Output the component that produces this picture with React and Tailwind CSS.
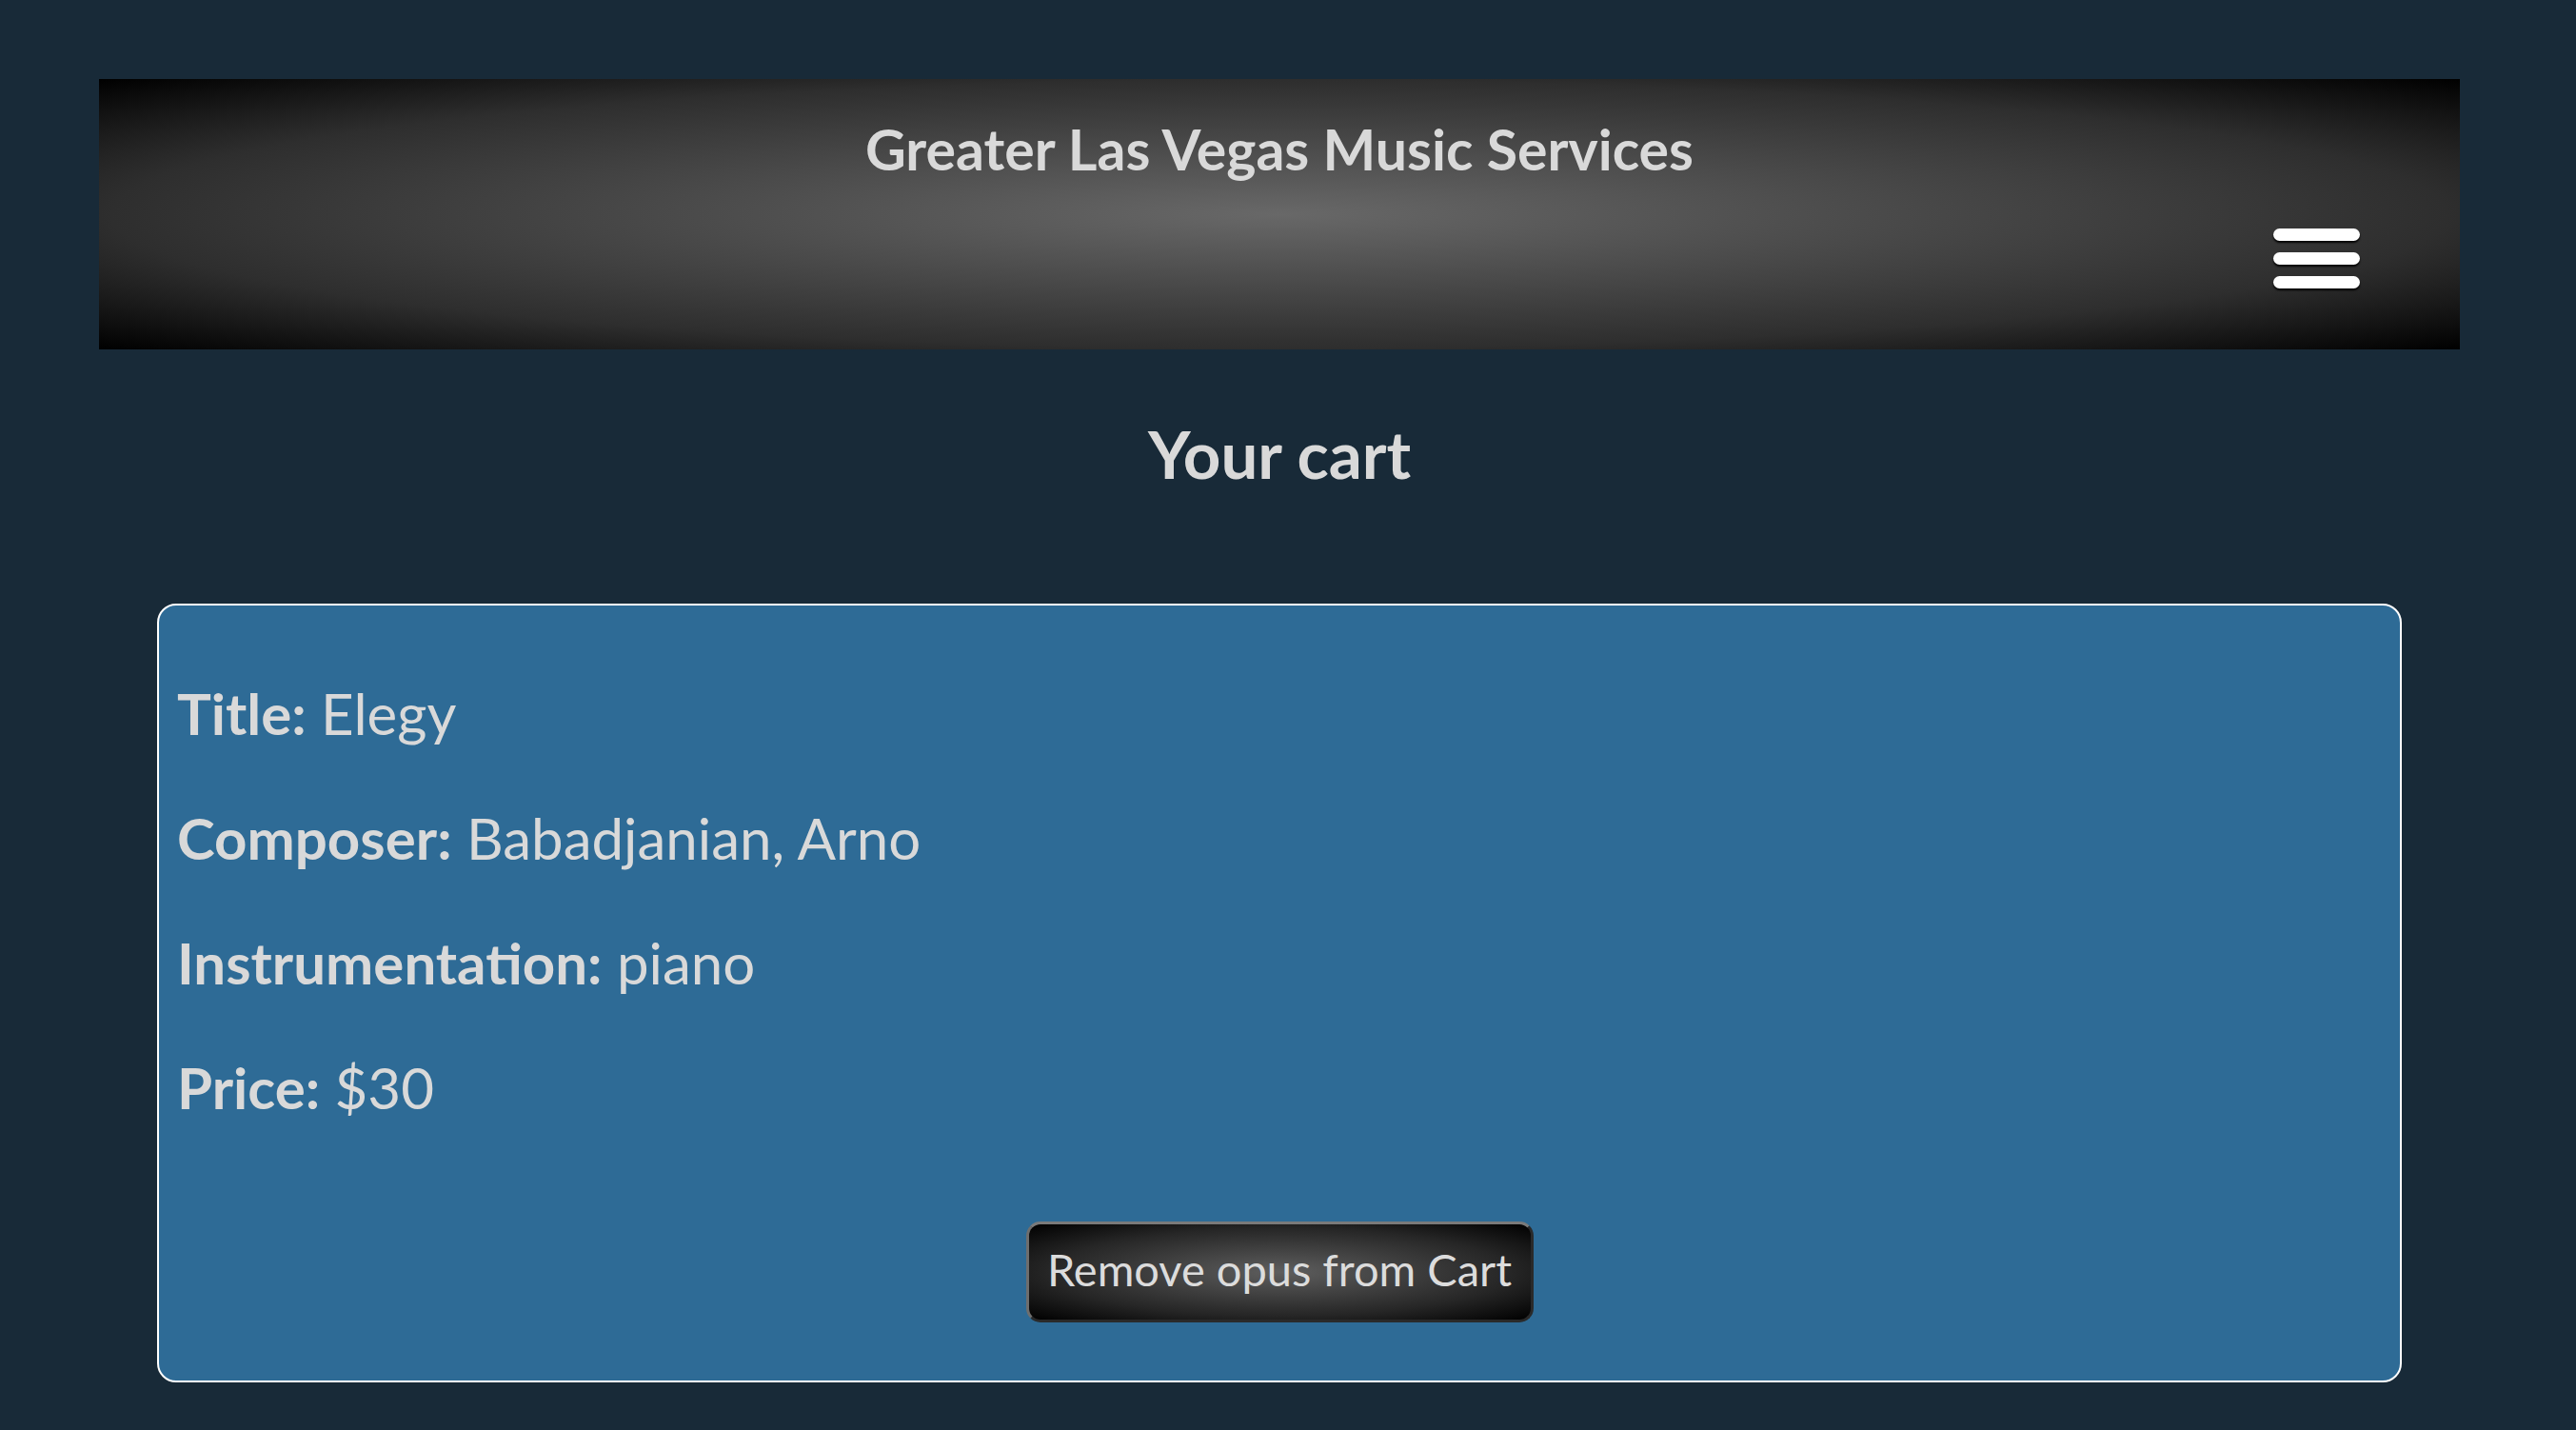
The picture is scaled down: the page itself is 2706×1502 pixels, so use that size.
import React from "react";

const item = {
  title: "Elegy",
  composer: "Babadjanian, Arno",
  instrumentation: "piano",
  price: "$30",
};

function Hamburger() {
  return (
    <button className="flex flex-col gap-[12px] w-[91px]" aria-label="Menu">
      <span className="block h-[13px] w-full rounded-full bg-white shadow-[0_2px_2px_rgba(0,0,0,0.95)]" />
      <span className="block h-[13px] w-full rounded-full bg-white shadow-[0_2px_2px_rgba(0,0,0,0.95)]" />
      <span className="block h-[13px] w-full rounded-full bg-white shadow-[0_2px_2px_rgba(0,0,0,0.95)]" />
    </button>
  );
}

function Header() {
  return (
    <header className="mx-[104px] h-[284px] flex flex-col bg-[radial-gradient(ellipse_at_center,#686868_0%,#2e2e2e_70%,#000_100%)]">
      <h1 className="pt-[38px] text-center text-[59px] leading-[72px] font-bold text-[#d9d9d9]">
        Greater Las Vegas Music Services
      </h1>
      <div className="mt-[47px] flex justify-end pr-[105px]">
        <Hamburger />
      </div>
    </header>
  );
}

function Row({ label, value }) {
  return (
    <p className="text-[60px] leading-[73px] text-[#d9d9d9]">
      <span className="font-bold">{label}:</span> {value}
    </p>
  );
}

function CartItem({ opus }) {
  return (
    <div className="mx-[165px] rounded-[20px] border-2 border-white bg-[#2e6b96] px-[19px] pt-[77px] pb-[61px]">
      <div className="flex flex-col gap-[58px]">
        <Row label="Title" value={opus.title} />
        <Row label="Composer" value={opus.composer} />
        <Row label="Instrumentation" value={opus.instrumentation} />
        <Row label="Price" value={opus.price} />
      </div>
      <div className="mt-[104px] flex justify-center">
        <button className="w-[533px] h-[106px] pb-[6px] flex items-center justify-center rounded-[15px] border-[3px] border-t-[#7a7a7a] border-l-[#6e6e6e] border-r-[#2a2a2a] border-b-[#2a2a2a] bg-[radial-gradient(ellipse_at_center,#5e5e5e_0%,#262626_65%,#000_100%)] text-[47px] leading-[55px] text-[#dcdcdc]">
          Remove opus from Cart
        </button>
      </div>
    </div>
  );
}

export default function App() {
  return (
    <div className="min-h-screen bg-[#182a38] font-['Lato',sans-serif]">
      <div className="w-[2688px] pt-[83px] pb-[49px]">
        <Header />
        <h2 className="mt-[69px] text-center text-[69px] leading-[82px] font-bold text-[#d9d9d9]">
          Your cart
        </h2>
        <div className="mt-[116px]">
          <CartItem opus={item} />
        </div>
      </div>
    </div>
  );
}
